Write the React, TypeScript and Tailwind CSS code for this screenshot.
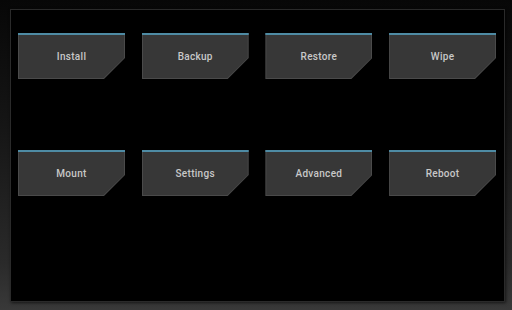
import React from "react";

const rows = [
  ["Install", "Backup", "Restore", "Wipe"],
  ["Mount", "Settings", "Advanced", "Reboot"],
];

function Btn({ label }: { label: string }) {
  return (
    <div className="relative w-[107px] h-[46px] bg-[#4a4a4a] [clip-path:polygon(0_0,100%_0,100%_25px,86px_100%,0_100%)]">
      <div className="h-[2px] bg-[#4e8ba4]" />
      <div className="absolute left-[1px] right-[1px] top-[2px] bottom-[1px] bg-[#373737] [clip-path:polygon(0_0,100%_0,100%_23px,84.6px_100%,0_100%)] flex items-center justify-center">
        <span className="text-[10px] font-medium text-[#c8c8c8] tracking-[0.3px] font-['Roboto',sans-serif]">
          {label}
        </span>
      </div>
    </div>
  );
}

export default function App() {
  return (
    <div className="w-[512px] h-[310px] overflow-hidden bg-[linear-gradient(to_bottom,#070707_0%,#151515_40%,#2a2a2a_85%,#393939_100%)] pt-[9px] pl-[10px]">
      <div className="w-[495px] h-[293px] bg-black border border-[#2a2a2a] shadow-[1px_1px_3px_rgba(0,0,0,0.6)] pt-[23px] pl-[7px]">
        <div className="flex flex-col gap-[71px]">
          {rows.map((r, i) => (
            <div key={i} className="flex gap-[16.7px]">
              {r.map((l) => (
                <Btn key={l} label={l} />
              ))}
            </div>
          ))}
        </div>
      </div>
    </div>
  );
}
